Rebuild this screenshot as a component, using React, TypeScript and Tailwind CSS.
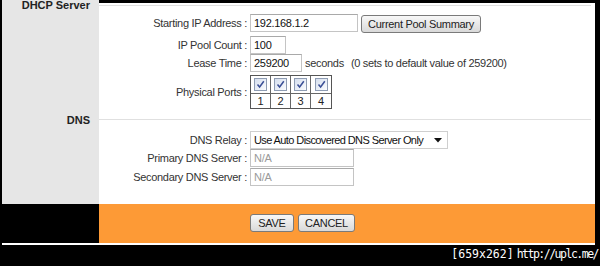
import React from "react";

function Input({ w, value, muted }: { w: string; value: string; muted?: boolean }) {
  return (
    <div
      className={`${w} h-[18px] border border-[#c4c4c4] border-t-[#a9a9a9] bg-white flex items-center px-[3px] whitespace-nowrap ${
        muted ? "text-[#9a9a9a]" : "text-[#111]"
      }`}
    >
      {value}
    </div>
  );
}

function Btn({ w, children }: { w: string; children: React.ReactNode }) {
  return (
    <div
      className={`${w} h-[18px] border border-[#7a7a7a] rounded-[3px] bg-linear-to-b from-[#f8f8f8] to-[#d9d9d9] text-[#222] flex items-center justify-center whitespace-nowrap`}
    >
      {children}
    </div>
  );
}

function Label({ children, h }: { children: React.ReactNode; h: string }) {
  return (
    <div className={`w-[148px] ${h} flex items-center justify-end text-[#333] whitespace-nowrap`}>{children}</div>
  );
}

function Check() {
  return (
    <div className="w-[13px] h-[13px] border border-[#8e9cb3] bg-linear-to-br from-[#d6dfee] to-[#fbfcfe] flex items-center justify-center">
      <svg width="11" height="11" viewBox="0 0 11 11">
        <path d="M2.5 5.5 L4.6 8 L8.8 2.2" stroke="#3a4f96" strokeWidth="1.5" fill="none" />
      </svg>
    </div>
  );
}

export default function App() {
  return (
    <div className="w-[600px] h-[266px] bg-black flex flex-col font-['Liberation_Sans',Arial,sans-serif] text-[11px] tracking-[-0.3px] text-[#333] overflow-hidden">
      <div className="flex h-[204px] pl-[2px] pr-[5px]">
        <div className="w-[97px] bg-[#e6e6e6] flex flex-col items-end pr-[9px]">
          <div className="font-bold leading-[11px] text-[#222] tracking-normal">DHCP Server</div>
          <div className="font-bold leading-[11px] mt-[104px] text-[#222] tracking-normal">DNS</div>
        </div>
        <div className="flex-1 flex flex-col">
          <div className="h-[3px] bg-black" />
          <div className="flex-1 bg-white flex flex-col">
            <div className="mt-[2px] h-px bg-[#e0e0e0] mr-[4px]" />

            <div className="mt-[8px] flex items-start">
              <Label h="h-[18px]">Starting IP Address :</Label>
              <div className="ml-[3px]">
                <Input w="w-[108px]" value="192.168.1.2" />
              </div>
              <div className="ml-[3px] mt-[1px]">
                <Btn w="w-[120px]">Current Pool Summary</Btn>
              </div>
            </div>

            <div className="mt-[3px] flex items-center">
              <Label h="h-[18px]">IP Pool Count :</Label>
              <div className="ml-[3px]">
                <Input w="w-[36px]" value="100" />
              </div>
            </div>

            <div className="flex items-center whitespace-nowrap">
              <Label h="h-[18px]">Lease Time :</Label>
              <div className="ml-[3px]">
                <Input w="w-[52px]" value="259200" />
              </div>
              <span className="ml-[3px]">seconds</span>
              <span className="ml-[7px]">(0 sets to default value of 259200)</span>
            </div>

            <div className="mt-[3px] flex items-center">
              <Label h="h-[34px]">Physical Ports :</Label>
              <div className="ml-[3px] border border-[#555] flex flex-col">
                <div className="flex h-[17px]">
                  {[0, 1, 2, 3].map((i) => (
                    <div
                      key={i}
                      className={`w-[20px] flex items-center justify-center ${i < 3 ? "border-r border-[#666]" : ""}`}
                    >
                      <Check />
                    </div>
                  ))}
                </div>
                <div className="flex h-[15px] border-t border-[#666]">
                  {["1", "2", "3", "4"].map((n, i) => (
                    <div
                      key={n}
                      className={`w-[20px] flex items-center justify-center text-[#222] ${
                        i < 3 ? "border-r border-[#666]" : ""
                      }`}
                    >
                      {n}
                    </div>
                  ))}
                </div>
              </div>
            </div>

            <div className="mt-[10px] h-px bg-[#e0e0e0] mr-[4px]" />

            <div className="mt-[11px] flex items-center">
              <Label h="h-[18px]">DNS Relay :</Label>
              <div className="ml-[3px] w-[198px] h-[18px] border border-[#cfcfcf] bg-white flex items-center justify-between pl-[3px] pr-[5px] text-[#111] whitespace-nowrap">
                <span className="tracking-[-0.6px]">Use Auto Discovered DNS Server Only</span>
                <svg width="8" height="5" viewBox="0 0 8 5">
                  <path d="M0 0 L8 0 L4 4.5 Z" fill="#111" />
                </svg>
              </div>
            </div>

            <div className="flex items-center">
              <Label h="h-[18px]">Primary DNS Server :</Label>
              <div className="ml-[3px]">
                <Input w="w-[104px]" value="N/A" muted />
              </div>
            </div>

            <div className="mt-[1px] flex items-center">
              <Label h="h-[18px]">Secondary DNS Server :</Label>
              <div className="ml-[3px]">
                <Input w="w-[104px]" value="N/A" muted />
              </div>
            </div>
          </div>
        </div>
      </div>

      <div className="flex h-[39px] pl-[2px] pr-[5px]">
        <div className="w-[97px] bg-black" />
        <div className="flex-1 bg-[#fd9a36] flex items-start gap-[4px] pl-[151px] pt-[10px]">
          <Btn w="w-[44px]">SAVE</Btn>
          <Btn w="w-[57px]">CANCEL</Btn>
        </div>
      </div>

      <div className="h-[2px] ml-[2px] mr-[5px] bg-white" />

      <div className="flex-1 flex justify-end items-start pr-[2px] pt-[1px] text-white tracking-normal">
        <span className="font-['DejaVu_Sans_Mono',monospace] text-[11.5px] leading-[17px]">[659x262]</span>
        <span className="ml-[3px] font-['DejaVu_Sans_Mono',monospace] text-[11.5px] tracking-[-1.5px] leading-[17px]">
          http://uplc.me/
        </span>
      </div>
    </div>
  );
}
